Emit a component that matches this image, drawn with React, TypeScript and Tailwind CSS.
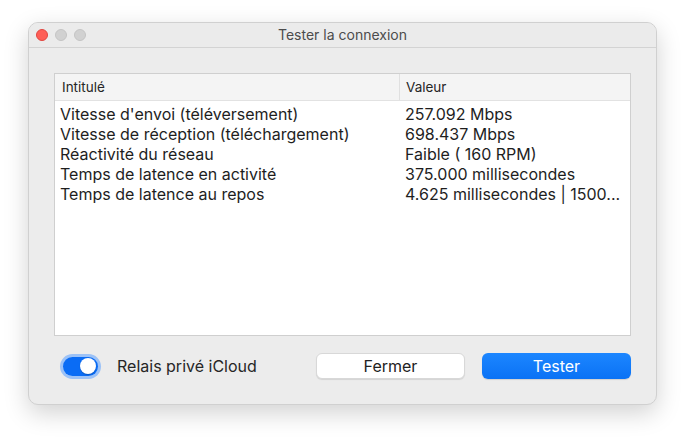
import { useState } from "react";

type Row = { label: string; value: string };

const ROWS: Row[] = [
  { label: "Vitesse d'envoi (téléversement)", value: "257.092 Mbps" },
  { label: "Vitesse de réception (téléchargement)", value: "698.437 Mbps" },
  { label: "Réactivité du réseau", value: "Faible ( 160 RPM)" },
  { label: "Temps de latence en activité", value: "375.000 millisecondes" },
  { label: "Temps de latence au repos", value: "4.625 millisecondes | 1500..." },
];

export default function App() {
  const [relay, setRelay] = useState(true);

  return (
    <div
      className="w-[690px] h-[443px] bg-white pt-[22px] pl-[28px]"
      style={{ fontFamily: "Inter, 'Liberation Sans', sans-serif" }}
    >
      <div className="w-[629px] h-[383px] bg-[#ececec] rounded-[10px] border border-[#d0d0d0] shadow-[0_8px_24px_rgba(0,0,0,0.18)] flex flex-col overflow-hidden">
        {/* Title bar */}
        <div className="relative h-[25px] shrink-0 flex items-center justify-center border-b border-[#d3d3d3] bg-[#ebebeb]">
          <div className="absolute left-[7px] top-[6px] flex gap-[7px]">
            <span className="w-[12px] h-[12px] rounded-full bg-[#fe5f57] border border-[#e14640]" />
            <span className="w-[12px] h-[12px] rounded-full bg-[#d1d1d1] border border-[#c4c4c4]" />
            <span className="w-[12px] h-[12px] rounded-full bg-[#d1d1d1] border border-[#c4c4c4]" />
          </div>
          <span className="text-[14px] text-[#4c4c4c] leading-none">Tester la connexion</span>
        </div>

        {/* Content */}
        <div className="flex-1 flex flex-col px-[25px] pt-[25px] pb-[25px]">
          <div className="h-[263px] bg-white border border-[#cfcfcf] flex flex-col">
            <div className="h-[27px] flex items-center bg-[#f4f4f4] border-b border-[#e2e2e2] text-[13.5px] text-[#262626]">
              <div className="w-[344px] pl-[7px] h-full flex items-center">Intitulé</div>
              <div className="flex-1 h-full flex items-center pl-[6px] border-l border-[#e0e0e0]">Valeur</div>
            </div>
            <div className="pt-[3px]">
              {ROWS.map((r) => (
                <div key={r.label} className="h-[20px] flex items-center text-[16px] text-[#1e1e1e]">
                  <div className="w-[345px] pl-[5px] truncate">{r.label}</div>
                  <div className="w-[225px] pl-[5px] whitespace-nowrap">{r.value}</div>
                </div>
              ))}
            </div>
          </div>

          <div className="mt-[17px] flex items-center">
            <button
              type="button"
              role="switch"
              aria-checked={relay}
              onClick={() => setRelay((v) => !v)}
              className="ml-[6px] w-[41px] h-[25px] rounded-full bg-[#9cc2f7] p-[3px] flex"
            >
              <span
                className={`w-full h-full rounded-full flex items-center px-[2px] ${relay ? "bg-[#0a6cf5] justify-end" : "bg-[#d0d0d0] justify-start"}`}
              >
                <span className="w-[16px] h-[16px] rounded-full bg-white shadow-[0_1px_1px_rgba(0,0,0,0.2)]" />
              </span>
            </button>
            <span className="ml-[16px] text-[16px] text-[#262626]">Relais privé iCloud</span>

            <button className="ml-auto w-[149px] h-[26px] rounded-[6px] bg-white border border-[#d8d8d8] shadow-[0_1px_1px_rgba(0,0,0,0.1)] text-[16px] text-[#222]">
              Fermer
            </button>
            <button className="ml-[17px] w-[149px] h-[26px] rounded-[6px] bg-gradient-to-b from-[#1c86ff] to-[#0a72f5] text-[16px] text-white shadow-[0_1px_1px_rgba(0,0,0,0.12)]">
              Tester
            </button>
          </div>
        </div>
      </div>
    </div>
  );
}
